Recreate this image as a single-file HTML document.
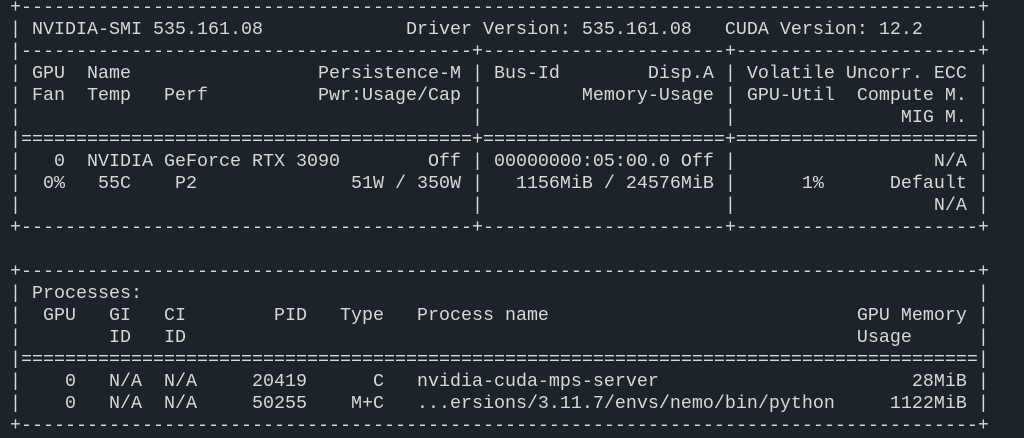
<!DOCTYPE html>
<html><head><meta charset="utf-8"><style>
html,body{margin:0;padding:0;background:#1c2329;width:1024px;height:438px;overflow:hidden}
pre{position:absolute;left:10px;top:-3px;margin:0;font-family:"Liberation Mono",monospace;font-size:18.33px;line-height:22px;color:#d6d8d9;white-space:pre}
</style></head><body><pre>+---------------------------------------------------------------------------------------+
| NVIDIA-SMI 535.161.08             Driver Version: 535.161.08   CUDA Version: 12.2     |
|-----------------------------------------+----------------------+----------------------+
| GPU  Name                 Persistence-M | Bus-Id        Disp.A | Volatile Uncorr. ECC |
| Fan  Temp   Perf          Pwr:Usage/Cap |         Memory-Usage | GPU-Util  Compute M. |
|                                         |                      |               MIG M. |
|=========================================+======================+======================|
|   0  NVIDIA GeForce RTX 3090        Off | 00000000:05:00.0 Off |                  N/A |
|  0%   55C    P2              51W / 350W |   1156MiB / 24576MiB |      1%      Default |
|                                         |                      |                  N/A |
+-----------------------------------------+----------------------+----------------------+

+---------------------------------------------------------------------------------------+
| Processes:                                                                            |
|  GPU   GI   CI        PID   Type   Process name                            GPU Memory |
|        ID   ID                                                             Usage      |
|=======================================================================================|
|    0   N/A  N/A     20419      C   nvidia-cuda-mps-server                       28MiB |
|    0   N/A  N/A     50255    M+C   ...ersions/3.11.7/envs/nemo/bin/python     1122MiB |
+---------------------------------------------------------------------------------------+</pre></body></html>
